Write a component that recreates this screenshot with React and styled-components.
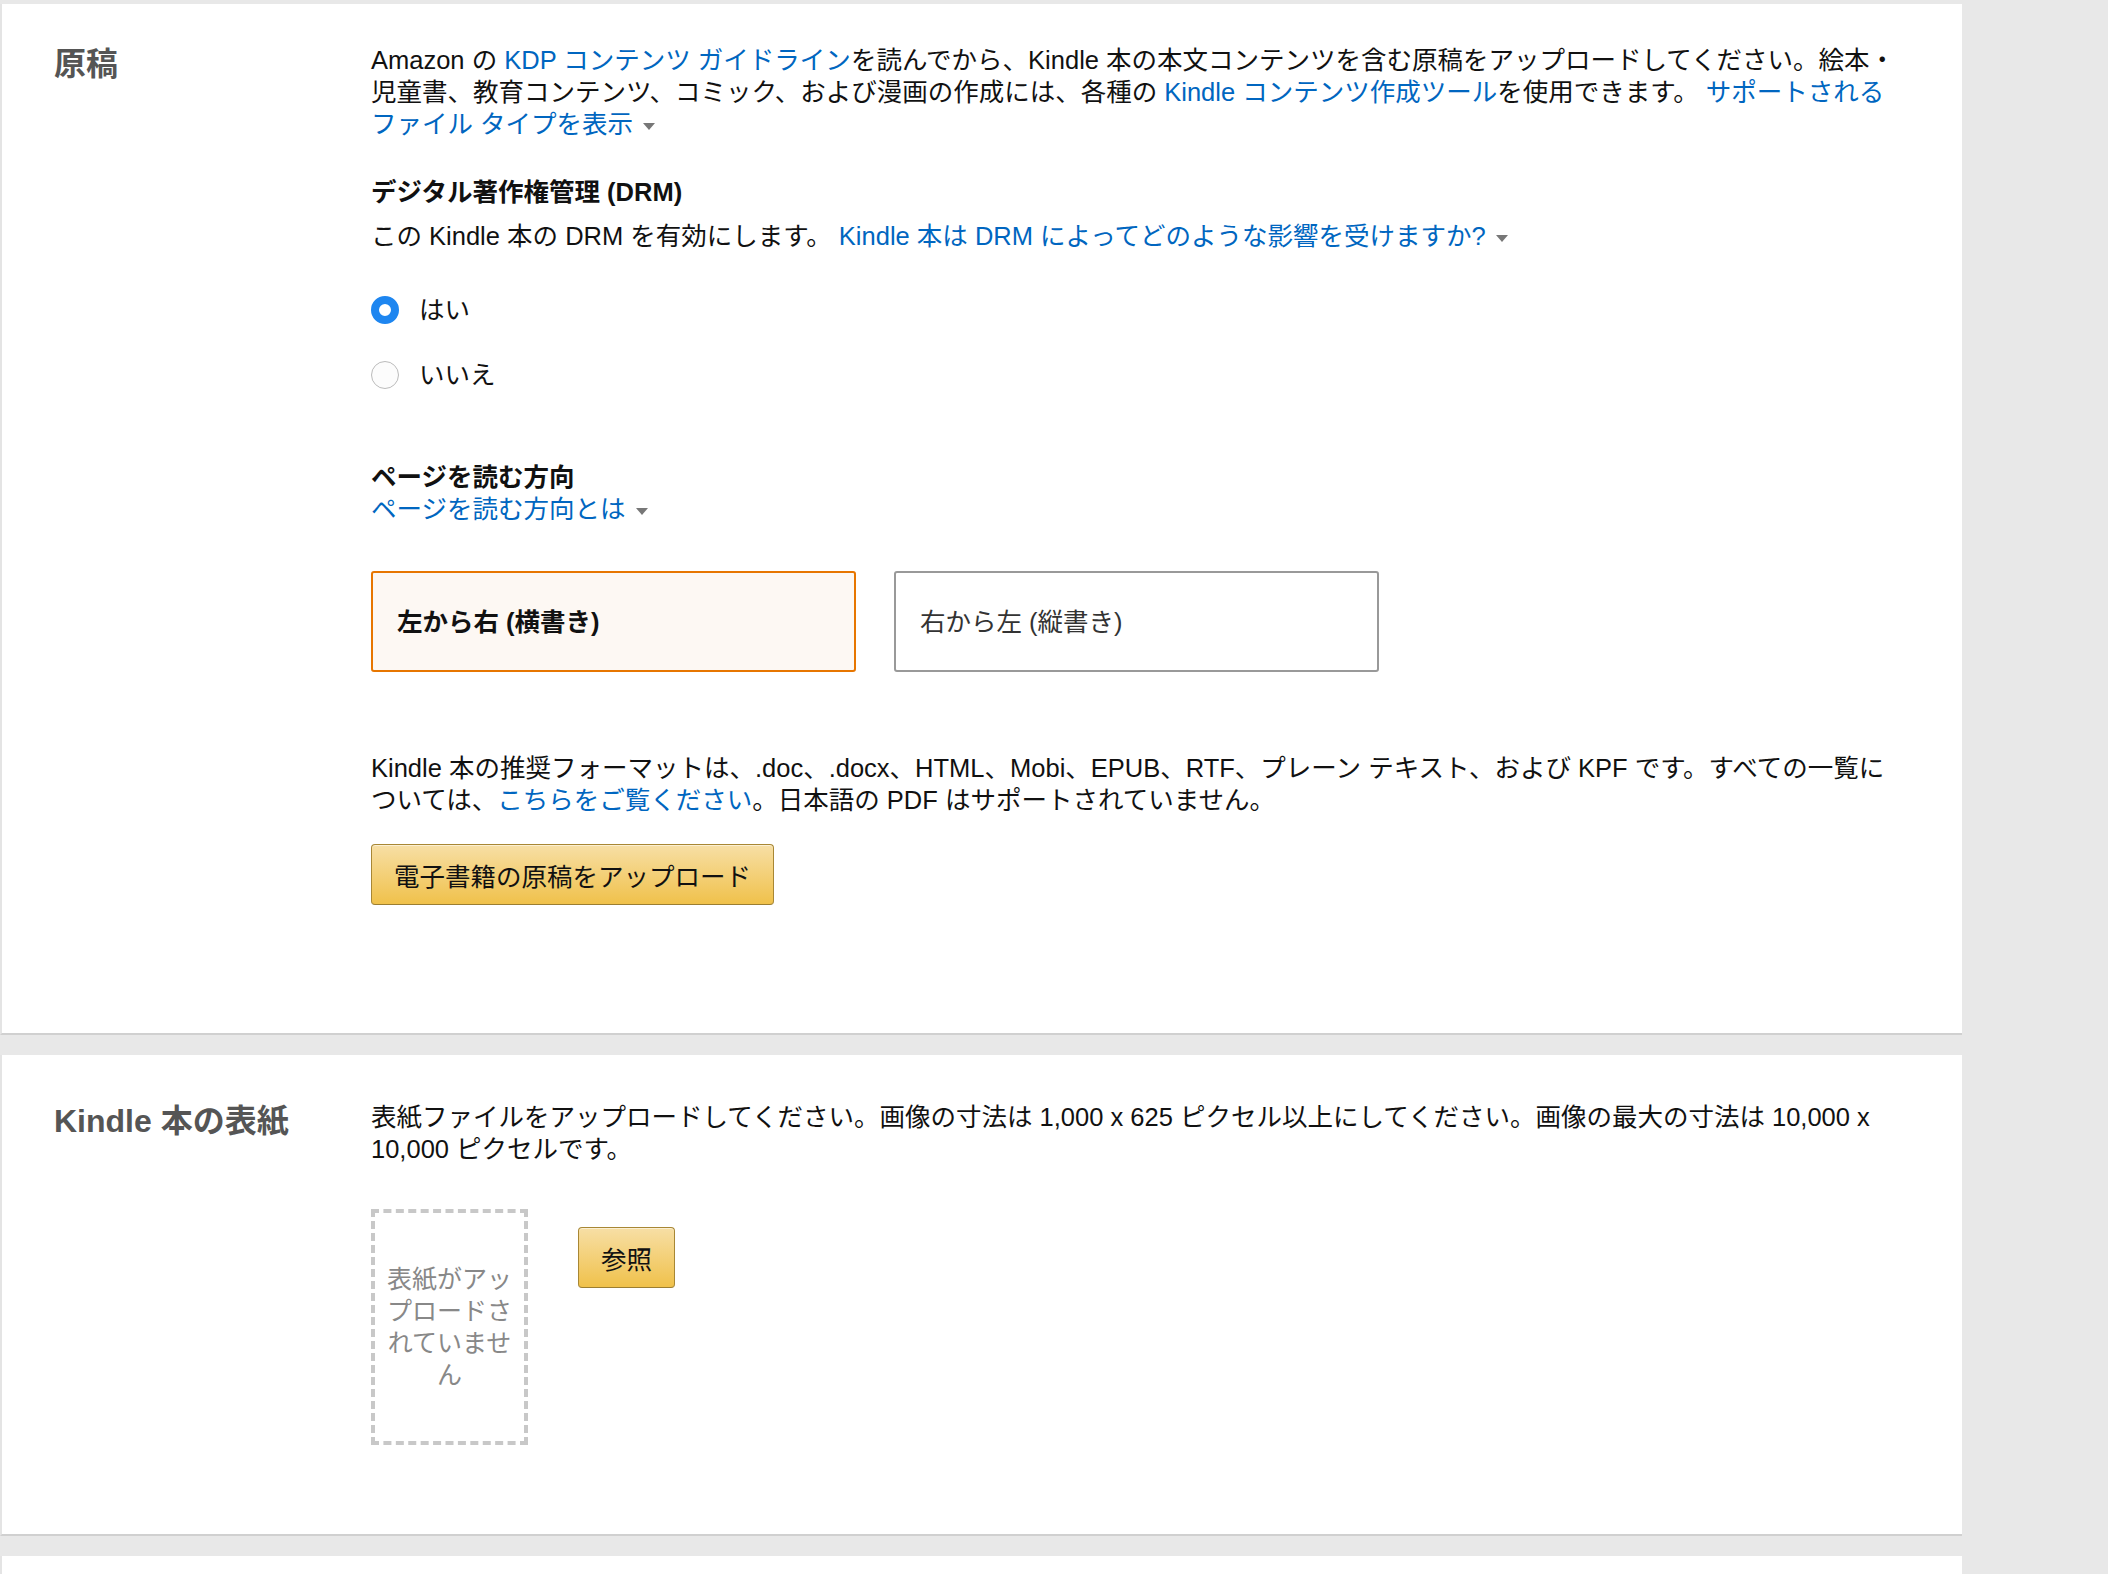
import React from "react";
import styled, { createGlobalStyle } from "styled-components";

const Global = createGlobalStyle`
  html, body { margin: 0; padding: 0; background: #e8e8e8; }
  body { font-family: "Liberation Sans", "Noto Sans CJK JP", sans-serif; color: #111; }
`;

const Page = styled.div`
  width: 1962px;
  padding-top: 4px;
  display: flex;
  flex-direction: column;
  gap: 20px;
`;

const Card = styled.section`
  background: #fff;
  border-bottom: 2px solid #d0d0d0;
  border-left: 2px solid #e4e4e4;
  display: flex;
  padding: ${(p) => p.$pad};
  min-height: ${(p) => p.$h}px;
  box-sizing: border-box;
`;

const Label = styled.h2`
  margin: 0;
  width: 369px;
  flex: none;
  padding-left: 52px;
  box-sizing: border-box;
  font-size: 32px;
  font-weight: bold;
  color: #555;
  line-height: 40px;
`;

const Content = styled.div`
  width: 1525px;
  font-size: 25.5px;
  line-height: 32px;
`;

const P = styled.p`
  margin: 0 0 ${(p) => p.$mb || 0}px;
`;

const A = styled.a`
  color: #0066c0;
  text-decoration: none;
`;

const Caret = styled.span`
  display: inline-block;
  width: 0;
  height: 0;
  border-left: 6px solid transparent;
  border-right: 6px solid transparent;
  border-top: 7px solid #777;
  margin-left: 10px;
  vertical-align: middle;
`;

const H3 = styled.h3`
  margin: 0;
  font-size: 25.5px;
  line-height: 32px;
  font-weight: bold;
`;

const Radios = styled.div`
  display: flex;
  flex-direction: column;
  gap: 33px;
  margin: 42px 0 0;
`;

const RadioRow = styled.label`
  display: flex;
  align-items: center;
  gap: 20px;
  font-size: 25.5px;
`;

const RadioDot = styled.span`
  width: 28px;
  height: 28px;
  border-radius: 50%;
  box-sizing: border-box;
  background: ${(p) => (p.$on ? "#fff" : "#fcfcfc")};
  border: ${(p) => (p.$on ? "8px solid #1e86f0" : "1.5px solid #bbb")};
`;

const Options = styled.div`
  display: flex;
  gap: 38px;
  margin-top: 46px;
`;

const Option = styled.div`
  width: 485px;
  height: 101px;
  box-sizing: border-box;
  border: 2px solid ${(p) => (p.$on ? "#e77600" : "#999")};
  border-radius: 3px;
  background: ${(p) => (p.$on ? "#fdf8f3" : "#fff")};
  display: flex;
  align-items: center;
  padding-left: 24px;
  font-size: 25.5px;
  font-weight: ${(p) => (p.$on ? "bold" : "normal")};
  color: ${(p) => (p.$on ? "#111" : "#333")};
`;

const Button = styled.button`
  font-family: inherit;
  font-size: 25.5px;
  color: #111;
  height: 61px;
  padding: 0 ${(p) => p.$px}px;
  border: 1.5px solid #a88734;
  border-bottom-color: #9c7e31;
  border-radius: 4px;
  background: linear-gradient(#f7dfa5, #f0c14b);
  box-shadow: inset 0 1px 0 rgba(255,255,255,0.5);
`;

const CoverRow = styled.div`
  display: flex;
  align-items: flex-start;
  gap: 50px;
  margin-top: 44px;
`;

const CoverBox = styled.div`
  width: 157px;
  height: 236px;
  box-sizing: border-box;
  border: 4px dashed #c8c8c8;
  display: flex;
  align-items: center;
  justify-content: center;
  text-align: center;
  color: #888;
  font-size: 25px;
  line-height: 32px;
  padding: 0 8px;
`;

const BrowseWrap = styled.div`
  margin-top: 18px;
`;

export default function App() {
  return (
    <>
      <Global />
      <Page>
        <Card $pad="40px 0 0" $h={1031}>
          <Label>原稿</Label>
          <Content>
            <P $mb={36}>
              Amazon の <A>KDP コンテンツ ガイドライン</A>を読んでから、Kindle 本の本文コンテンツを含む原稿をアップロードしてください。絵本・児童書、教育コンテンツ、コミック、および漫画の作成には、各種の <A>Kindle コンテンツ作成ツール</A>を使用できます。 <A>サポートされるファイル タイプを表示</A><Caret />
            </P>
            <H3>デジタル著作権管理 (DRM)</H3>
            <P style={{ marginTop: 12 }}>
              この Kindle 本の DRM を有効にします。 <A>Kindle 本は DRM によってどのような影響を受けますか?</A><Caret />
            </P>
            <Radios>
              <RadioRow><RadioDot $on />はい</RadioRow>
              <RadioRow><RadioDot />いいえ</RadioRow>
            </Radios>
            <H3 style={{ marginTop: 70 }}>ページを読む方向</H3>
            <P><A>ページを読む方向とは</A><Caret /></P>
            <Options>
              <Option $on>左から右 (横書き)</Option>
              <Option>右から左 (縦書き)</Option>
            </Options>
            <P style={{ marginTop: 80 }} $mb={28}>
              Kindle 本の推奨フォーマットは、.doc、.docx、HTML、Mobi、EPUB、RTF、プレーン テキスト、および KPF です。すべての一覧については、<A>こちらをご覧ください</A>。日本語の PDF はサポートされていません。
            </P>
            <Button $px={22}>電子書籍の原稿をアップロード</Button>
          </Content>
        </Card>
        <Card $pad="46px 0 0" $h={481}>
          <Label>Kindle 本の表紙</Label>
          <Content>
            <P>
              表紙ファイルをアップロードしてください。画像の寸法は 1,000 x 625 ピクセル以上にしてください。画像の最大の寸法は 10,000 x 10,000 ピクセルです。
            </P>
            <CoverRow>
              <CoverBox>表紙がアップロードされていません</CoverBox>
              <BrowseWrap><Button $px={22}>参照</Button></BrowseWrap>
            </CoverRow>
          </Content>
        </Card>
        <Card $pad="0" $h={30} />
      </Page>
    </>
  );
}
